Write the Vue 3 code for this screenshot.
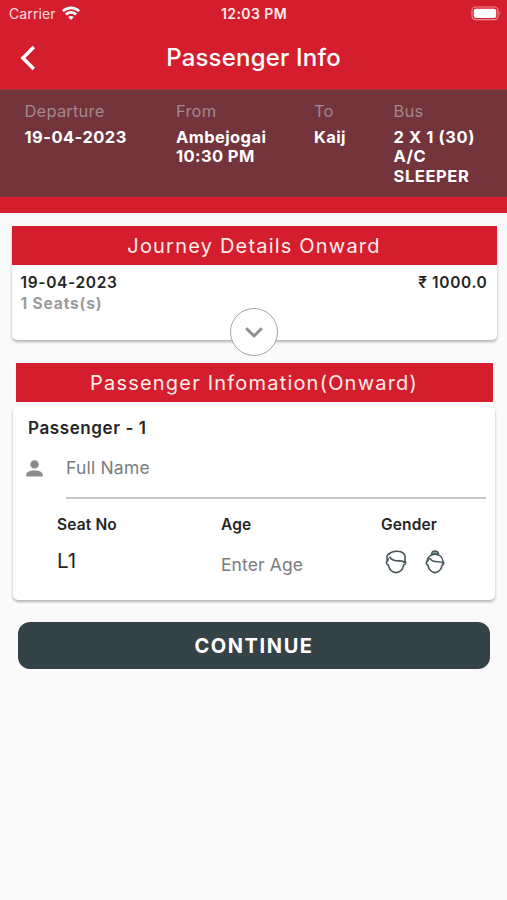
<script setup>
const trip = [
  { key: 'departure', label: 'Departure', lines: ['19-04-2023'] },
  { key: 'from', label: 'From', lines: ['Ambejogai', '10:30 PM'] },
  { key: 'to', label: 'To', lines: ['Kaij'] },
  { key: 'bus', label: 'Bus', lines: ['2 X 1 (30)', 'A/C', 'SLEEPER'] },
]
</script>

<template>
  <main class="screen">
    <header class="top">
      <div class="status">
        <div class="carrier">
          <span>Carrier</span>
          <svg class="wifi" width="18" height="14" viewBox="0 0 18 14" fill="none" stroke="#fff" stroke-width="2.6">
            <path d="M0.9 5.2C5.4 0.7 12.6 0.7 17.1 5.2" />
            <path d="M3.9 8.5C6.8 5.7 11.2 5.7 14.1 8.5" />
            <path d="M9 13.9L6.2 11.1C7.8 9.6 10.2 9.6 11.8 11.1Z" fill="#fff" stroke="none" />
          </svg>
        </div>
        <span class="clock">12:03 PM</span>
        <svg class="battery" width="31" height="15" viewBox="0 0 31 15">
          <rect x="1" y="1" width="26" height="12.6" rx="3.6" fill="none" stroke="#ec8d94" stroke-width="1.1" />
          <rect x="2.8" y="2.7" width="22.4" height="9.2" rx="2" fill="#fff" />
          <path d="M28.4 5.2Q30.4 7.2 28.4 9.3Z" fill="#ec8d94" />
        </svg>
      </div>
      <nav class="nav">
        <svg class="back" width="16" height="26" viewBox="0 0 16 26" fill="none" stroke="#fff" stroke-width="3.5">
          <path d="M13.8 2L2.9 13L13.8 24" />
        </svg>
        <h1>Passenger Info</h1>
      </nav>
      <div class="trip">
        <div v-for="item in trip" :key="item.key" class="trip-item" :class="item.key">
          <span class="trip-label">{{ item.label }}</span>
          <strong v-for="line in item.lines" :key="line">{{ line }}</strong>
        </div>
      </div>
    </header>

    <section class="card journey">
      <h2>Journey Details Onward</h2>
      <div class="journey-row">
        <div class="journey-info">
          <strong class="date">19-04-2023</strong>
          <span class="seats">1 Seats(s)</span>
        </div>
        <strong class="price">₹ 1000.0</strong>
      </div>
      <button class="expand" aria-label="Expand">
        <svg width="20" height="13" viewBox="0 0 20 13" fill="none" stroke="#8f8f8f" stroke-width="3">
          <path d="M2.2 2.2L10 10L17.8 2.2" />
        </svg>
      </button>
    </section>

    <h2 class="passenger-heading">Passenger Infomation(Onward)</h2>
    <section class="card passenger">
      <h3>Passenger - 1</h3>
      <div class="name-row">
        <svg width="17" height="17" viewBox="0 0 17 17" fill="#8a8a8a">
          <circle cx="8.5" cy="4.4" r="4.2" />
          <path d="M0.3 16.5V14.5C0.3 9.2 16.7 9.2 16.7 14.5V16.5Z" />
        </svg>
        <div class="name-field">Full Name</div>
      </div>
      <div class="details">
        <div class="detail seat">
          <strong>Seat No</strong>
          <span class="seat-value">L1</span>
        </div>
        <div class="detail age">
          <strong>Age</strong>
          <span class="age-value">Enter Age</span>
        </div>
        <div class="detail gender">
          <strong>Gender</strong>
          <div class="faces">
            <svg width="22" height="24" viewBox="0 0 22 24" fill="none" stroke="#46555a" stroke-width="1.6" stroke-linejoin="round" stroke-linecap="round">
              <path d="M2.3 11.2C1.6 7.5 1.8 4.6 3.8 4.1C7 0.5 15.5 0.2 18.6 3.4C20.5 5.4 20.3 8.5 19.8 11.2" />
              <path d="M3.2 8.7C3.1 10 2.9 10.7 2.2 11.2C0.7 12.2 1.5 14.8 3.3 14.9C4.3 19.6 7.3 22.6 11 22.6C14.7 22.6 17.8 19.6 18.8 14.9C20.6 14.8 21.4 12.2 19.8 11.2" />
              <path d="M4.8 7.2C7 10.6 10.5 11 14.4 10.9C16.6 10.8 18.2 11.2 19.3 12.4" />
            </svg>
            <svg width="20" height="24" viewBox="0 0 20 24" fill="none" stroke="#46555a" stroke-width="1.6" stroke-linejoin="round" stroke-linecap="round">
              <path d="M6.6 4.8C6.3 2.4 7.8 1 10 1C12.2 1 13.7 2.4 13.4 4.8Q10 3.2 6.6 4.8Z" fill="#9ba4a7" />
              <path d="M2 11.6C2.4 7.3 5.6 4.3 10 4.3C14.4 4.3 17.6 7.3 18 11.6" />
              <path d="M3.6 9.2C3.4 10.5 2.9 11.1 2 11.7C0.6 12.6 1.2 14.8 2.8 15C3.8 19.6 6.8 22.6 10 22.6C13.2 22.6 16.2 19.6 17.2 15C18.8 14.8 19.4 12.6 18 11.6" />
              <path d="M4.8 8.4C6.6 11.5 9.8 11.8 13.2 11.7C15.4 11.7 16.7 12 17.6 13" />
            </svg>
          </div>
        </div>
      </div>
    </section>

    <button class="continue">CONTINUE</button>
  </main>
</template>

<style>
body {
  margin: 0;
  background: #fafafa;
}
</style>

<style scoped>
* {
  box-sizing: border-box;
}

.screen {
  width: 507px;
  height: 900px;
  overflow: hidden;
  background: #fafafa;
  color: #252525;
  font-family: Inter, 'Liberation Sans', sans-serif;
  white-space: nowrap;
}

h1,
h2,
h3 {
  margin: 0;
}

button {
  padding: 0;
  font-family: inherit;
}

.top {
  height: 213px;
  background: #d41e2d;
  color: #fff;
}

.status {
  display: grid;
  grid-template-columns: 1fr auto 1fr;
  align-items: center;
  height: 27px;
  padding: 0 5px 0 9px;
}

.carrier {
  display: flex;
  align-items: center;
  gap: 6px;
  font-size: 14px;
  color: #fbdfe1;
  letter-spacing: 0.1px;
}

.wifi {
  margin-top: -2px;
}

.clock {
  margin-right: 3px;
  font-size: 14px;
  font-weight: 600;
  letter-spacing: 0.4px;
  color: #fdecec;
}

.battery {
  justify-self: end;
}

.nav {
  display: grid;
  grid-template-columns: 20px 1fr 20px;
  align-items: center;
  height: 62px;
  padding: 0 20px;
}

.back {
  margin-top: -1px;
}

.nav h1 {
  text-align: center;
  font-size: 24px;
  line-height: 30px;
  font-weight: 500;
  letter-spacing: 0.2px;
}

.trip {
  display: grid;
  grid-template-columns: 151.5px 138px 79.5px 1fr;
  height: 108px;
  padding: 14px 0 0 24.5px;
  background: #73343c;
  border-top: 1px solid #8d3a43;
}

.trip-item {
  display: flex;
  flex-direction: column;
  font-size: 16.5px;
  line-height: 19.6px;
  letter-spacing: 0.4px;
}

.trip-label {
  margin: -2px 0 6px;
  color: #a2888a;
  font-size: 16.5px;
  letter-spacing: 0.2px;
}

.trip-item strong {
  font-weight: 700;
}

.trip-item.departure {
  letter-spacing: 0.45px;
}

.trip-item.bus {
  letter-spacing: 0.6px;
}

.card {
  background: #fff;
  border-radius: 5px;
  box-shadow: 0 2px 3px rgba(0, 0, 0, 0.28);
}

h2 {
  height: 39px;
  background: #d41e2d;
  color: #fdecec;
  text-align: center;
  font-size: 20px;
  line-height: 40px;
  font-weight: 400;
  letter-spacing: 1.2px;
}

.journey {
  position: relative;
  height: 114px;
  margin: 13px 10.5px 0 11.5px;
}

.journey-row {
  display: flex;
  justify-content: space-between;
  padding: 8px 9px 0;
  font-size: 15.5px;
  line-height: 20.5px;
}

.journey-info {
  display: flex;
  flex-direction: column;
}

.date,
.price {
  font-weight: 600;
  letter-spacing: 0.65px;
}

.seats {
  color: #9c9c9c;
  font-weight: 700;
  letter-spacing: 0.85px;
}

.expand {
  position: absolute;
  left: 218px;
  top: 82px;
  display: grid;
  place-items: center;
  width: 48px;
  height: 48px;
  background: #fff;
  border: 1.4px solid #a5a5a5;
  border-radius: 50%;
}

.passenger-heading {
  margin: 23px 14.5px 0 15.5px;
}

.passenger {
  height: 194px;
  margin: 4px 12px 0 13px;
  padding: 11.5px 9px 0 15px;
}

.passenger h3 {
  font-size: 17px;
  line-height: 20px;
  font-weight: 600;
  letter-spacing: 0.6px;
}

.name-row {
  display: flex;
  padding: 22px 0 0 0;
  margin-left: -2px;
}

.name-field {
  flex: 1;
  height: 42px;
  margin: -2.5px 0 0 23px;
  border-bottom: 2px solid #c6c6c6;
  color: #7c7c7c;
  font-size: 17.5px;
  line-height: 22px;
  letter-spacing: 0.2px;
}

.details {
  display: grid;
  grid-template-columns: 164px 160px 1fr;
  padding: 16px 0 0 29px;
}

.detail {
  display: flex;
  flex-direction: column;
  font-size: 15.5px;
  line-height: 20px;
}

.detail strong {
  font-weight: 600;
  letter-spacing: 0.15px;
}

.seat-value {
  margin-top: 16px;
  font-size: 20.5px;
}

.age-value {
  margin-top: 20px;
  color: #7c7c7c;
  font-size: 17.5px;
  letter-spacing: 0.1px;
}

.faces {
  display: flex;
  gap: 18px;
  padding: 14.5px 0 0 3.5px;
}

.continue {
  display: block;
  width: 472px;
  height: 47px;
  margin: 22px 0 0 18px;
  border: 0;
  border-radius: 12px;
  background: #344348;
  color: #fff;
  font-size: 20px;
  font-weight: 700;
  letter-spacing: 1.6px;
}
</style>
